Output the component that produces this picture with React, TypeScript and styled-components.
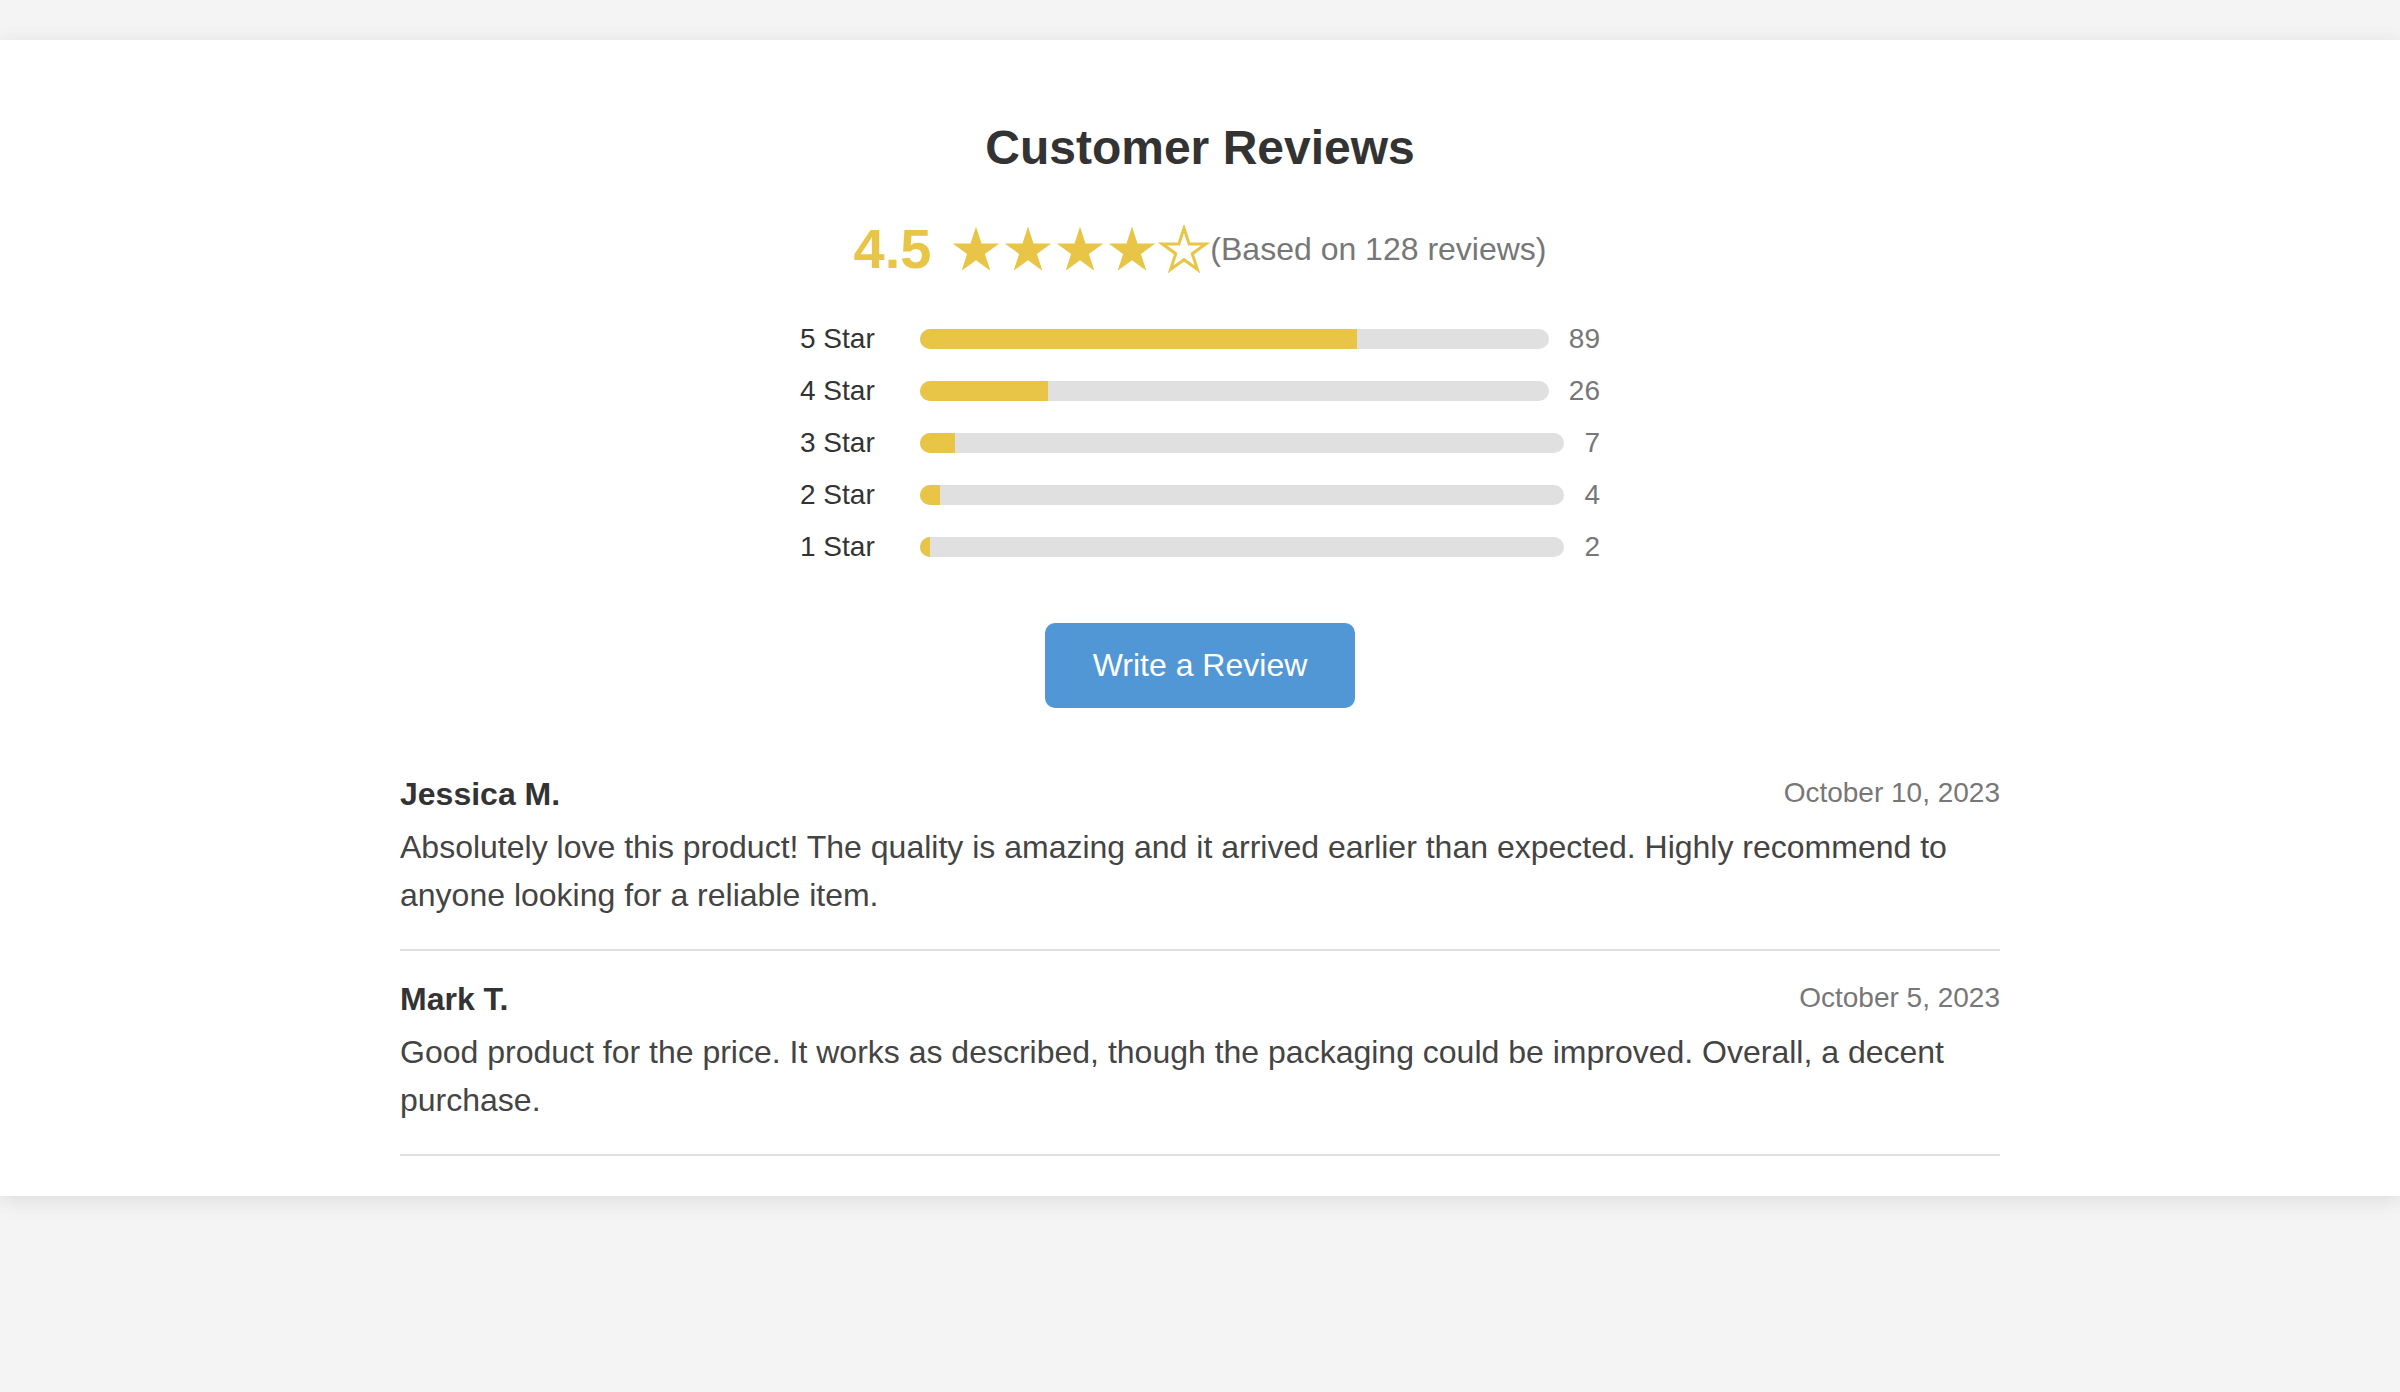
import React from "react";
import styled, { createGlobalStyle } from "styled-components";

const GlobalStyle = createGlobalStyle`
  html, body {
    margin: 0;
    padding: 0;
  }
  body {
    background: #f4f4f4;
    font-family: "Liberation Sans", Arial, Helvetica, sans-serif;
    color: #333;
    min-height: 100vh;
  }
  * { box-sizing: border-box; }
`;

const Page = styled.div`
  padding: 40px 0;
`;

const Card = styled.section`
  background: #ffffff;
  padding: 40px;
  box-shadow: 0 4px 20px rgba(0, 0, 0, 0.1);
`;

const Inner = styled.div`
  max-width: 1600px;
  margin: 0 auto;
`;

const Title = styled.h2`
  margin: 40px 0 42px;
  font-size: 48px;
  font-weight: 700;
  color: #333;
  text-align: center;
  line-height: 55px;
`;

const Summary = styled.div`
  display: flex;
  align-items: center;
  justify-content: center;
  margin-bottom: 42px;
`;

const Score = styled.span`
  font-size: 56px;
  font-weight: 700;
  color: #e8c547;
  line-height: 64px;
  margin-right: 19px;
`;

const Stars = styled.span`
  display: flex;
  align-items: center;
`;

const StarSvg = styled.svg`
  display: block;
  width: 52px;
  height: 48px;
`;

const BasedOn = styled.span`
  font-size: 32px;
  color: #777;
`;

const Distribution = styled.div`
  max-width: 800px;
  margin: 0 auto 60px;
  display: flex;
  flex-direction: column;
  gap: 20px;
`;

const DistRow = styled.div`
  display: flex;
  align-items: center;
  height: 32px;
`;

const DistLabel = styled.span`
  width: 100px;
  margin-right: 20px;
  font-size: 28px;
  color: #333;
  white-space: nowrap;
`;

const Track = styled.div`
  flex: 1;
  height: 20px;
  background: #e0e0e0;
  border-radius: 10px;
  overflow: hidden;
`;

const Fill = styled.div`
  height: 100%;
  background: #e8c547;
`;

const Count = styled.span`
  margin-left: 20px;
  font-size: 28px;
  color: #777;
`;

const ButtonWrap = styled.div`
  display: flex;
  justify-content: center;
`;

const WriteButton = styled.button`
  background: #5197d6;
  color: #fff;
  border: none;
  border-radius: 10px;
  padding: 24px 48px;
  font-family: "Liberation Sans", Arial, Helvetica, sans-serif;
  font-size: 32px;
  line-height: 37px;
  cursor: pointer;
`;

const ReviewList = styled.div`
  margin-top: 38px;
`;

const ReviewItem = styled.article`
  padding: 30px 0;
  border-bottom: 2px solid #e0e0e0;
`;

const ReviewHeader = styled.div`
  display: flex;
  justify-content: space-between;
  align-items: center;
  margin-bottom: 10px;
`;

const Name = styled.span`
  font-size: 32px;
  font-weight: 700;
  color: #333;
  line-height: 37px;
`;

const DateText = styled.span`
  font-size: 28px;
  color: #777;
  padding-bottom: 4px;
`;

const ReviewText = styled.p`
  margin: 0;
  font-size: 32px;
  line-height: 48px;
  color: #444;
`;

const makeStar = (R: number) => {
  const cx = 26;
  const cy = 26;
  const r = R * 0.382;
  const pts: string[] = [];
  for (let i = 0; i < 10; i++) {
    const rad = i % 2 === 0 ? R : r;
    const a = (-90 + i * 36) * (Math.PI / 180);
    pts.push(`${(cx + rad * Math.cos(a)).toFixed(2)},${(cy + rad * Math.sin(a)).toFixed(2)}`);
  }
  return pts.join(" ");
};

const starPoints = makeStar(24.5);
const outlinePoints = makeStar(22.8);

const Star: React.FC<{ filled: boolean }> = ({ filled }) => (
  <StarSvg viewBox="0 0 52 48">
    {filled ? (
      <polygon points={starPoints} fill="#e8c547" />
    ) : (
      <polygon points={outlinePoints} fill="none" stroke="#e8c547" strokeWidth={3} strokeLinejoin="miter" />
    )}
  </StarSvg>
);

const dist = [
  { label: "5 Star", count: 89 },
  { label: "4 Star", count: 26 },
  { label: "3 Star", count: 7 },
  { label: "2 Star", count: 4 },
  { label: "1 Star", count: 2 },
];

const reviews = [
  {
    name: "Jessica M.",
    date: "October 10, 2023",
    text: "Absolutely love this product! The quality is amazing and it arrived earlier than expected. Highly recommend to anyone looking for a reliable item.",
  },
  {
    name: "Mark T.",
    date: "October 5, 2023",
    text: "Good product for the price. It works as described, though the packaging could be improved. Overall, a decent purchase.",
  },
];

export default function App() {
  const total = 128;
  return (
    <>
      <GlobalStyle />
      <Page>
        <Card>
          <Inner>
            <Title>Customer Reviews</Title>
            <Summary>
              <Score>4.5</Score>
              <Stars aria-label="4.5 out of 5 stars">
                {[0, 1, 2, 3, 4].map((i) => (
                  <Star key={i} filled={i < 4} />
                ))}
              </Stars>
              <BasedOn>(Based on 128 reviews)</BasedOn>
            </Summary>
            <Distribution>
              {dist.map((d) => (
                <DistRow key={d.label}>
                  <DistLabel>{d.label}</DistLabel>
                  <Track>
                    <Fill style={{ width: `${(d.count / total) * 100}%` }} />
                  </Track>
                  <Count>{d.count}</Count>
                </DistRow>
              ))}
            </Distribution>
            <ButtonWrap>
              <WriteButton>Write a Review</WriteButton>
            </ButtonWrap>
            <ReviewList>
              {reviews.map((r) => (
                <ReviewItem key={r.name}>
                  <ReviewHeader>
                    <Name>{r.name}</Name>
                    <DateText>{r.date}</DateText>
                  </ReviewHeader>
                  <ReviewText>{r.text}</ReviewText>
                </ReviewItem>
              ))}
            </ReviewList>
          </Inner>
        </Card>
      </Page>
    </>
  );
}
